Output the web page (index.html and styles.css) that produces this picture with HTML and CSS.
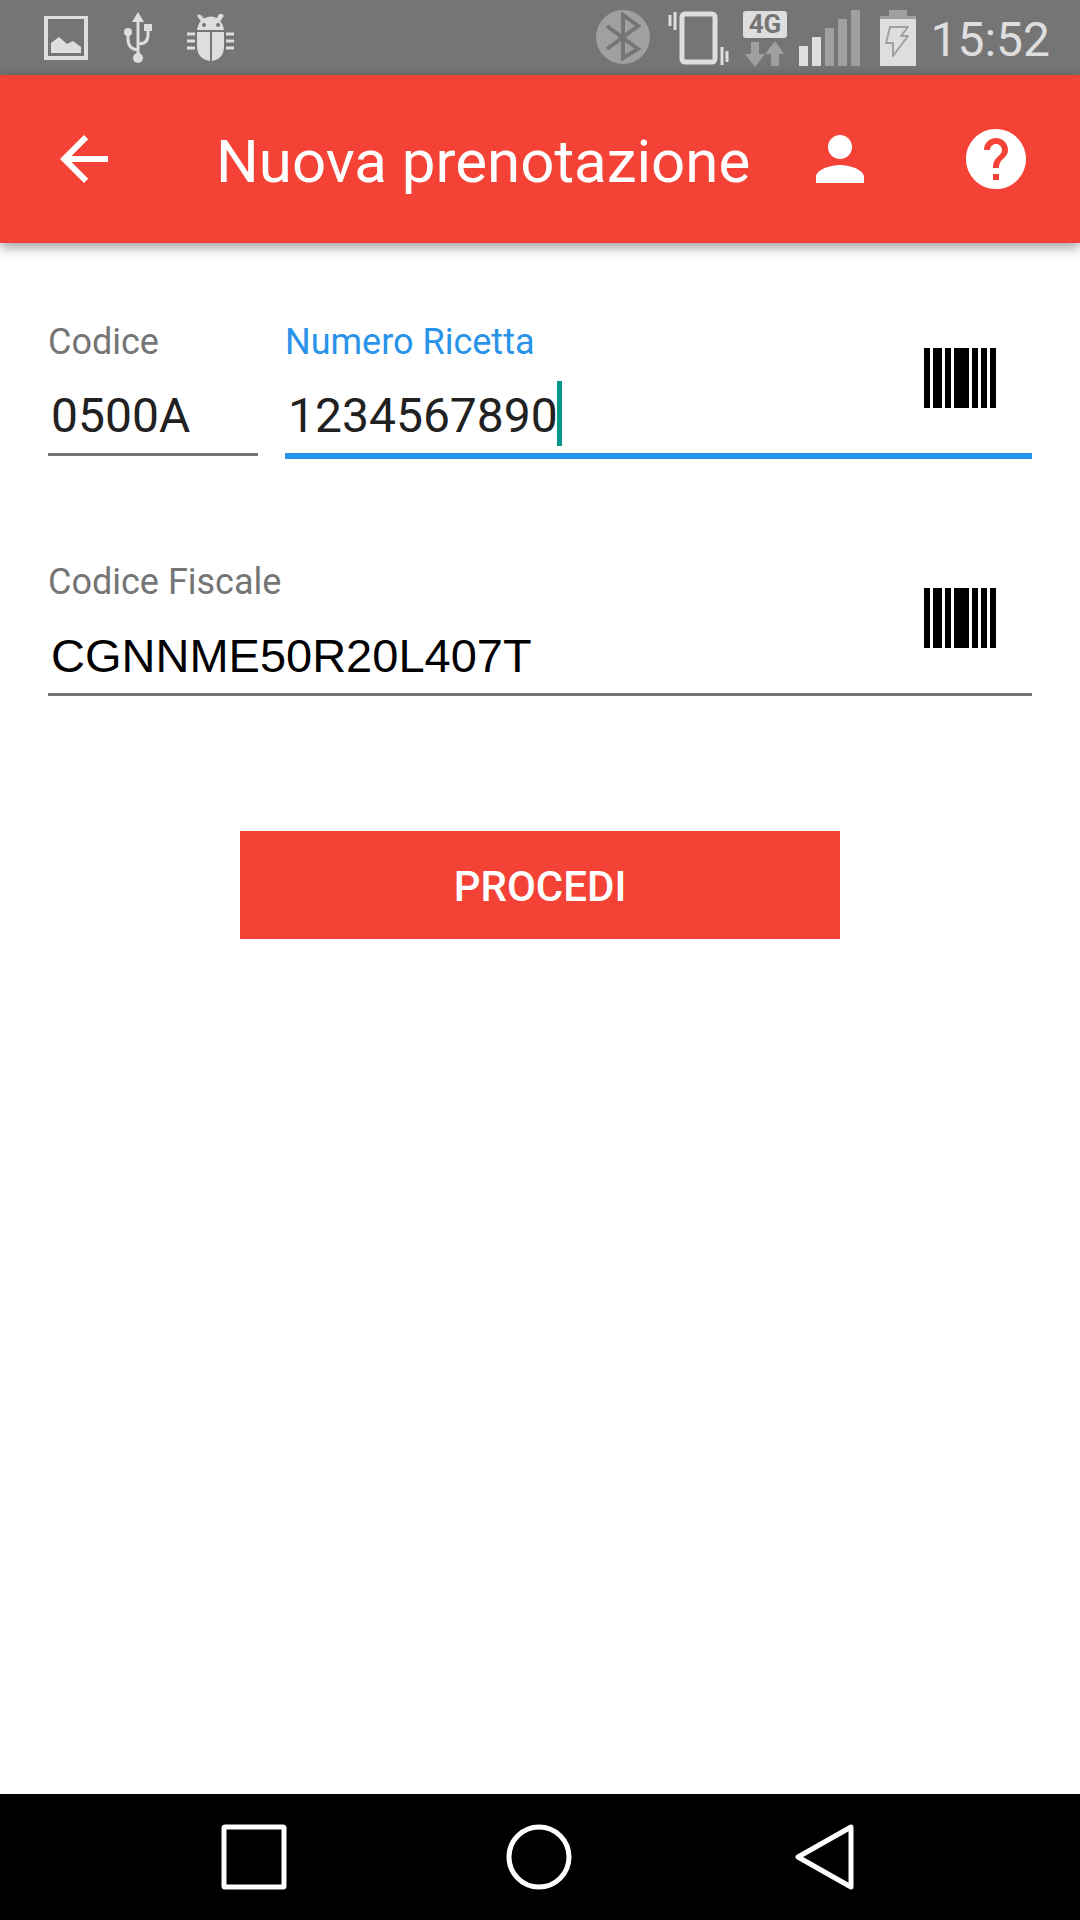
FILE: index.html
```html
<!DOCTYPE html>
<html lang="it">
<head>
<meta charset="utf-8">
<meta name="viewport" content="width=device-width, initial-scale=1">
<title>Nuova prenotazione</title>
<link rel="stylesheet" href="styles.css">
</head>
<body>
<div class="status-bar">
  <div class="status-group">
    <svg width="44" height="44" viewBox="0 0 44 44" aria-hidden="true"><path class="light" fill-rule="evenodd" d="M0 0H44V44H0ZM4 3V40H40V3Z"/><path class="light" d="M7 37V27L15 21L23 28L29 25L37 31V37Z"/></svg>
    <svg width="28" height="52" viewBox="0 0 28 52" aria-hidden="true"><path class="light" d="M14 0L20 10H8ZM20 12H28V19H20Z"/><circle class="light" cx="4" cy="20" r="4"/><circle class="light" cx="14" cy="46" r="5"/><path class="light-line" stroke-width="3" d="M14 8V44M4 22V27Q4 37 14 38M24 18V23Q24 32 14 32"/></svg>
    <svg width="48" height="48" viewBox="0 0 48 48" aria-hidden="true"><path class="light" fill-rule="evenodd" d="M10 16Q11 8 17 4L14 1H13L16 4H18Q24 1 30 4L32 0H36L31 5Q36 9 37 16ZM17 9a2 2 0 1 0 .1 0ZM31 9a2 2 0 1 0 .1 0Z"/><path class="light-line" stroke-width="3" stroke-linecap="round" d="M12 2L15 6M35 2L32 6"/><path class="light" d="M10 18H23V47Q10 45 10 32ZM25 18H37V32Q37 45 25 47Z"/><path class="light-line" stroke-width="3" d="M0 20H8M0 27H8M0 34H8M39 20H47M39 27H47M39 34H47"/></svg>
  </div>
  <div class="status-group status-system">
    <svg class="system-icons" viewBox="0 0 320 58" aria-hidden="true">
      <circle class="dim" cx="27" cy="28" r="27"/>
      <path class="gray-line" stroke-width="4" d="M11 17L42 40L27 49V6L42 17L11 40"/>
      <path class="light-line" stroke-width="3" d="M74 6V17M79 3V21M126 38V56M131 42V53"/>
      <rect class="light-line" x="86" y="5" width="33" height="48" rx="3" stroke-width="5"/>
      <rect class="light" x="147" y="2" width="44" height="27" rx="3"/>
      <text class="network" x="169" y="24" text-anchor="middle">4G</text>
      <path class="dim" d="M155 33H163V45H169L159 58L149 45H155ZM179 32L188 45H183V57H175V45H169Z"/>
      <path class="light" d="M203 37H212V57H203ZM216 28H225V57H216Z"/>
      <path class="dim" d="M229 19H238V57H229ZM242 10H251V57H242ZM255 1H264V57H255ZM293 1H311V7H320V10H284V7H293Z"/>
      <path class="light" d="M284 10H320V57H284Z"/>
      <path class="dim-line" stroke-width="2" stroke-linejoin="round" d="M294 18H312L305 27H312L297 47V34H290Z"/>
    </svg>
    <time class="clock">15:52</time>
  </div>
</div>

<header class="app-bar">
  <button class="icon-button" type="button" aria-label="Indietro"><svg viewBox="0 0 24 24"><path d="M20 11H7.83l5.59-5.59L12 4l-8 8 8 8 1.41-1.41L7.83 13H20v-2z"/></svg></button>
  <h1>Nuova prenotazione</h1>
  <button class="icon-button" type="button" aria-label="Profilo"><svg viewBox="0 0 24 24"><path d="M12 12c2.21 0 4-1.79 4-4s-1.79-4-4-4-4 1.79-4 4 1.79 4 4 4zm0 2c-2.67 0-8 1.34-8 4v2h16v-2c0-2.66-5.33-4-8-4z"/></svg></button>
  <button class="icon-button" type="button" aria-label="Aiuto"><svg viewBox="0 0 24 24"><path d="M12 2C6.48 2 2 6.48 2 12s4.48 10 10 10 10-4.48 10-10S17.52 2 12 2zm1 17h-2v-2h2v2zm2.07-7.75l-.9.92C13.45 12.9 13 13.5 13 15h-2v-.5c0-1.1.45-2.1 1.17-2.83l1.24-1.26c.37-.36.59-.86.59-1.41 0-1.1-.9-2-2-2s-2 .9-2 2H8c0-2.21 1.79-4 4-4s4 1.79 4 4c0 .88-.36 1.68-.93 2.25z"/></svg></button>
</header>

<main>
  <form class="booking">
    <div class="row">
      <div class="field field-code">
        <label for="codice">Codice</label>
        <input id="codice" type="text" value="0500A">
      </div>
      <div class="field field-active">
        <label for="numero">Numero Ricetta</label>
        <input id="numero" type="text" value="1234567890">
        <span class="caret"></span>
        <button class="scan" type="button" aria-label="Scansiona numero ricetta"><svg viewBox="0 0 72 60"><path d="M0 0H6V60H0ZM9 0H18V60H9ZM21 0H27V60H21ZM30 0H45V60H30ZM48 0H54V60H48ZM57 0H63V60H57ZM66 0H72V60H66Z"/></svg></button>
      </div>
    </div>
    <div class="row">
      <div class="field">
        <label for="fiscale">Codice Fiscale</label>
        <input id="fiscale" class="fiscal-code" type="text" value="CGNNME50R20L407T">
        <button class="scan" type="button" aria-label="Scansiona codice fiscale"><svg viewBox="0 0 72 60"><path d="M0 0H6V60H0ZM9 0H18V60H9ZM21 0H27V60H21ZM30 0H45V60H30ZM48 0H54V60H48ZM57 0H63V60H57ZM66 0H72V60H66Z"/></svg></button>
      </div>
    </div>
    <button class="submit" type="submit">PROCEDI</button>
  </form>
</main>

<nav class="nav-bar" aria-label="Sistema">
  <button type="button" aria-label="Recenti"><svg viewBox="0 0 66 66"><rect x="3" y="3" width="60" height="60" rx="1"/></svg></button>
  <button type="button" aria-label="Home"><svg viewBox="0 0 66 66"><circle cx="33" cy="33" r="30"/></svg></button>
  <button type="button" aria-label="Indietro"><svg viewBox="0 0 66 66"><path d="M60 3V63L7 33Z"/></svg></button>
</nav>
</body>
</html>
```
FILE: styles.css
```css
* {
  box-sizing: border-box;
}

body {
  margin: 0;
  min-height: 100vh;
  display: flex;
  flex-direction: column;
  background: #fff;
  font-family: Roboto, "Liberation Sans", sans-serif;
}

button {
  border: 0;
  padding: 0;
  background: none;
  font-family: inherit;
}

svg {
  display: block;
  flex: none;
}

/* Status bar */
.status-bar {
  height: 75px;
  padding: 0 30px 0 44px;
  display: flex;
  align-items: center;
  justify-content: space-between;
  background: #757575;
}

.status-group {
  display: flex;
  align-items: center;
}

.status-group > svg:nth-child(2) {
  margin: 0 35px 0 36px;
}

.status-system {
  gap: 14px;
}

.system-icons {
  width: 320px;
  height: 58px;
}

.light { fill: #dedede; }
.dim { fill: #a0a0a0; }
.light-line { fill: none; stroke: #dedede; }
.dim-line { fill: none; stroke: #a0a0a0; }
.gray-line { fill: none; stroke: #757575; }

.network {
  fill: #757575;
  font-size: 26px;
  font-weight: 700;
}

.clock {
  padding-top: 4px;
  color: #dedede;
  font-size: 48px;
  line-height: 56px;
}

/* App bar */
.app-bar {
  height: 168px;
  padding: 0 48px;
  display: flex;
  align-items: center;
  background: #f44336;
  box-shadow: 0 4px 12px rgba(0, 0, 0, 0.4);
}

.app-bar h1 {
  flex: 1;
  margin: 0 0 0 96px;
  padding-top: 6px;
  color: #fff;
  font-size: 60px;
  font-weight: 400;
  line-height: 72px;
}

.icon-button {
  width: 72px;
  height: 72px;
}

.icon-button + .icon-button {
  margin-left: 84px;
}

.icon-button svg {
  width: 100%;
  fill: #fff;
}

/* Form */
main {
  flex: 1;
  padding: 76px 48px;
}

.booking {
  display: flex;
  flex-direction: column;
}

.row {
  height: 240px;
  display: flex;
  gap: 27px;
}

.field {
  position: relative;
  flex: 1;
  display: flex;
  flex-direction: column;
  align-items: stretch;
}

.field-code {
  flex: 0 0 210px;
}

.field label {
  color: #757575;
  font-size: 36px;
  line-height: 46px;
}

.field input {
  width: 100%;
  height: 91px;
  padding: 19px 3px 6px;
  border: 0;
  border-bottom: 3px solid #757575;
  border-radius: 0;
  outline: 0;
  background: none;
  color: #212121;
  font-family: inherit;
  font-size: 48px;
}

.field .fiscal-code {
  color: #000;
  font-family: "Liberation Sans", Arial, sans-serif;
  font-size: 47px;
}

.field-active label {
  color: #2893e8;
}

.field-active input {
  height: 94px;
  border-bottom: 6px solid #2893e8;
}

.caret {
  position: absolute;
  left: 272px;
  top: 62px;
  width: 5px;
  height: 65px;
  background: #009688;
}

.scan {
  position: absolute;
  top: 29px;
  right: 36px;
  width: 72px;
  height: 60px;
}

.submit {
  align-self: center;
  width: 600px;
  max-width: 100%;
  height: 108px;
  margin-top: 32px;
  padding-top: 2px;
  background: #f44336;
  color: #fff;
  font-size: 42px;
  font-weight: 500;
}

/* System navigation */
.nav-bar {
  height: 126px;
  padding: 0 223px 0 221px;
  display: flex;
  align-items: center;
  justify-content: space-between;
  background: #000;
}

.nav-bar button {
  width: 66px;
  height: 66px;
}

.nav-bar svg {
  fill: none;
  stroke: #fff;
  stroke-width: 5px;
  stroke-linejoin: round;
}
```
